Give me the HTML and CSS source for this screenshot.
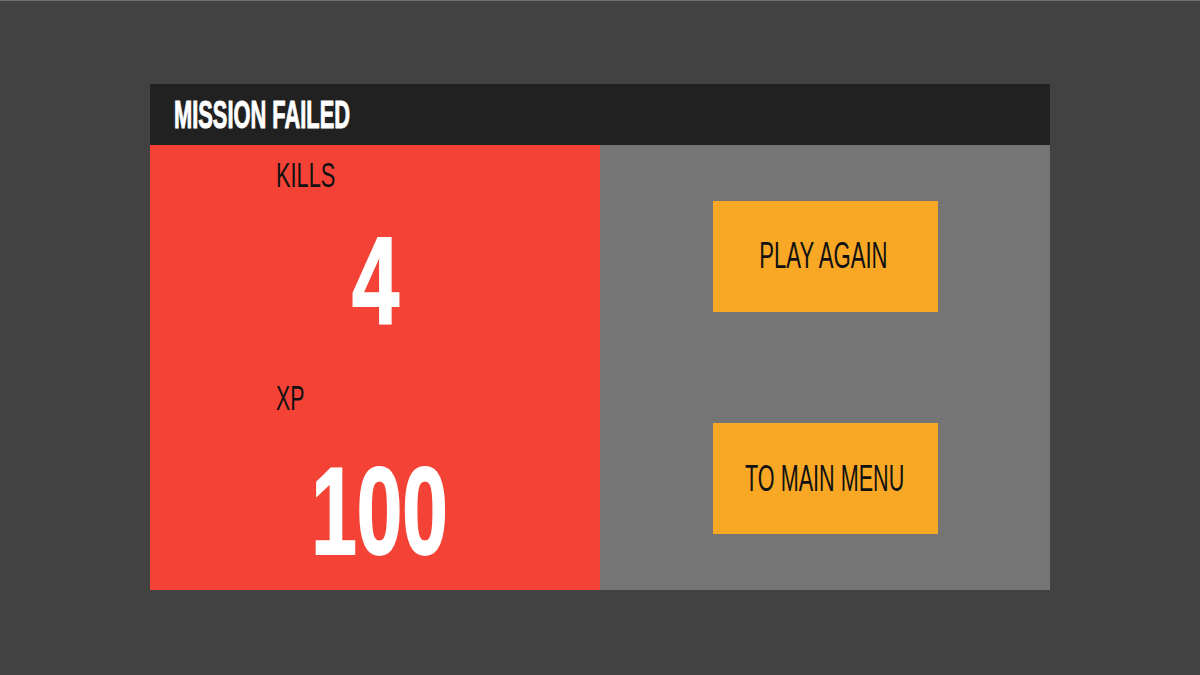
FILE: index.html
```html
<!DOCTYPE html>
<html lang="en">
<head>
<meta charset="utf-8">
<title>Mission Failed</title>
<link rel="stylesheet" href="styles.css">
</head>
<body>
  <main class="screen">
    <section class="dialog">
      <header class="dialog-header">
        <h1 class="title"><span class="squeeze squeeze-title">MISSION FAILED</span></h1>
      </header>
      <div class="dialog-body">
        <div class="stats">
          <div class="stat stat-kills">
            <div class="stat-label"><span class="squeeze squeeze-kills">KILLS</span></div>
            <div class="stat-value"><span class="squeeze squeeze-num1">4</span></div>
          </div>
          <div class="stat stat-xp">
            <div class="stat-label"><span class="squeeze squeeze-xp">XP</span></div>
            <div class="stat-value"><span class="squeeze squeeze-num3">100</span></div>
          </div>
        </div>
        <div class="actions">
          <button class="btn" type="button"><span class="squeeze squeeze-play">PLAY AGAIN</span></button>
          <button class="btn" type="button"><span class="squeeze squeeze-menu">TO MAIN MENU</span></button>
        </div>
      </div>
    </section>
  </main>
</body>
</html>
```

FILE: styles.css
```css
* {
  box-sizing: border-box;
}

html, body {
  margin: 0;
  padding: 0;
}

body {
  width: 1200px;
  height: 675px;
  background: #424242;
  border-top: 1px solid #6f6f6f;
  font-family: "Liberation Sans", Arial, sans-serif;
  overflow: hidden;
}

.screen {
  display: flex;
  justify-content: center;
  padding-top: 83px;
}

.dialog {
  width: 900px;
  display: flex;
  flex-direction: column;
}

.dialog-header {
  height: 61px;
  background: #212121;
  display: flex;
  align-items: center;
  padding-left: 24px;
}

.title {
  margin: 0;
  font-size: 38px;
  line-height: 1;
  font-weight: 700;
  color: #ffffff;
  -webkit-text-stroke: 1px #ffffff;
}

/* condensed display type */
.squeeze {
  display: inline-block;
  white-space: nowrap;
}

.squeeze-title {
  transform: scaleX(0.575);
  transform-origin: left center;
}

.dialog-body {
  height: 445px;
  display: flex;
}

.stats {
  width: 450px;
  background: #f44336;
  padding-top: 12px;
  display: flex;
  flex-direction: column;
}

.stat-xp {
  margin-top: 38px;
}

.stat-label {
  padding-left: 126px;
  font-size: 35px;
  line-height: 1;
  color: #111111;
}

.squeeze-kills {
  transform: scaleX(0.623);
  transform-origin: left center;
}

.squeeze-xp {
  transform: scaleX(0.61);
  transform-origin: left center;
}

.stat-value {
  text-align: center;
  font-size: 124px;
  line-height: 1;
  font-weight: 700;
  color: #ffffff;
  -webkit-text-stroke: 2px #ffffff;
  margin-top: 26px;
}

.stat-xp .stat-value {
  margin-top: 34px;
  padding-left: 8px;
}

.squeeze-num1 {
  transform: scaleX(0.684);
}

.squeeze-num3 {
  transform: scaleX(0.66);
}

.actions {
  width: 450px;
  background: #757575;
  display: flex;
  flex-direction: column;
  align-items: center;
  justify-content: space-around;
}

.btn {
  width: 225px;
  height: 111px;
  border: 0;
  background: #f9a825;
  color: #111111;
  font-family: inherit;
  font-size: 36px;
  line-height: 1;
  display: flex;
  align-items: center;
  justify-content: center;
  padding: 0;
  cursor: pointer;
}

.squeeze-play {
  transform: scaleX(0.614);
  margin-left: -4px;
}

.squeeze-menu {
  transform: scaleX(0.6);
}
```
